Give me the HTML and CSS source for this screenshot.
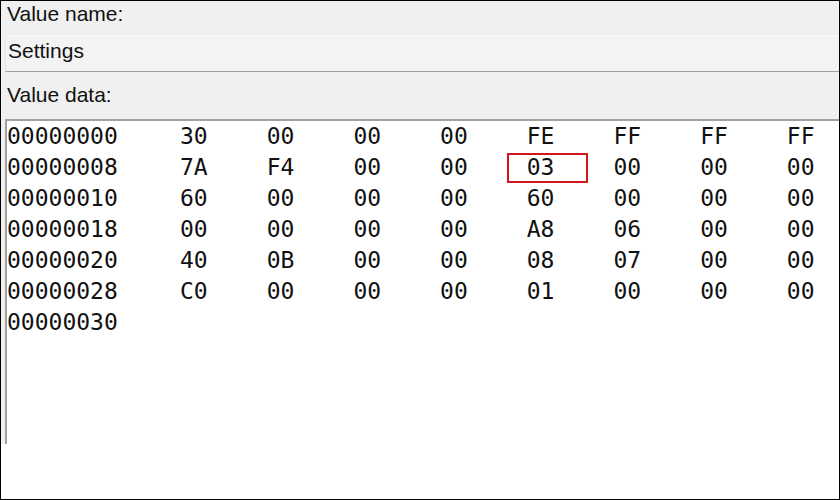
FILE: index.html
```html
<!DOCTYPE html>
<html lang="en">
<head>
    <meta charset="UTF-8">
    <meta name="viewport" content="width=device-width, initial-scale=1.0">
    <title>Edit Binary Value</title>
    <link rel="stylesheet" href="styles.css">
</head>
<body>
    <div class="frame">
        <div class="top">
            <div class="label">Value name:</div>
            <div class="name-field">Settings</div>
            <div class="label data-label">Value data:</div>
        </div>
        <div class="hex-wrap">
            <div class="hex">
                <span>00000000</span><span>30</span><span>00</span><span>00</span><span>00</span><span>FE</span><span>FF</span><span>FF</span><span>FF</span>
                <span>00000008</span><span>7A</span><span>F4</span><span>00</span><span>00</span><span class="mark">03</span><span>00</span><span>00</span><span>00</span>
                <span>00000010</span><span>60</span><span>00</span><span>00</span><span>00</span><span>60</span><span>00</span><span>00</span><span>00</span>
                <span>00000018</span><span>00</span><span>00</span><span>00</span><span>00</span><span>A8</span><span>06</span><span>00</span><span>00</span>
                <span>00000020</span><span>40</span><span>0B</span><span>00</span><span>00</span><span>08</span><span>07</span><span>00</span><span>00</span>
                <span>00000028</span><span>C0</span><span>00</span><span>00</span><span>00</span><span>01</span><span>00</span><span>00</span><span>00</span>
                <span>00000030</span>
            </div>
        </div>
        <div class="bottom"></div>
    </div>
</body>
</html>
```

FILE: styles.css
```css
*{
    margin: 0;
    padding: 0;
    box-sizing: border-box;
}
html, body{
    background-color: white;
}
.frame{
    width: 840px;
    height: 500px;
    border: 1px solid black;
    display: flex;
    flex-direction: column;
    background-color: rgb(240, 240, 240);
    color: #111;
    font-family: "Liberation Sans", Arial, sans-serif;
    font-size: 21px;
}
.top{
    padding: 1px 0 0 4px;
    height: 118px;
}
.label{
    line-height: 24px;
    padding-left: 2px;
}
.name-field{
    margin-top: 9px;
    height: 37px;
    padding: 3px 0 0 2px;
    line-height: 24px;
    background-color: rgb(243, 243, 243);
    border-top: 1px solid #fbfbfb;
    border-left: 1px solid #e4e4e4;
    border-bottom: 1px solid #a0a0a0;
}
.data-label{
    margin-top: 11px;
}
.hex-wrap{
    padding-left: 4px;
}
.hex{
    height: 325px;
    background-color: white;
    border-top: 2px solid #a2a2a2;
    border-left: 2px solid #a2a2a2;
    display: grid;
    grid-template-columns: 173px repeat(8, 86.7px);
    grid-auto-rows: 31px;
    align-content: start;
    font-family: "DejaVu Sans Mono", monospace;
    font-size: 23px;
    line-height: 31px;
    color: #111;
}
.mark{
    position: relative;
}
.mark::after{
    content: "";
    position: absolute;
    left: -20px;
    top: 1px;
    width: 77px;
    height: 26px;
    border: 2px solid #d4161c;
}
.bottom{
    flex: 1;
    background-color: white;
}
```
